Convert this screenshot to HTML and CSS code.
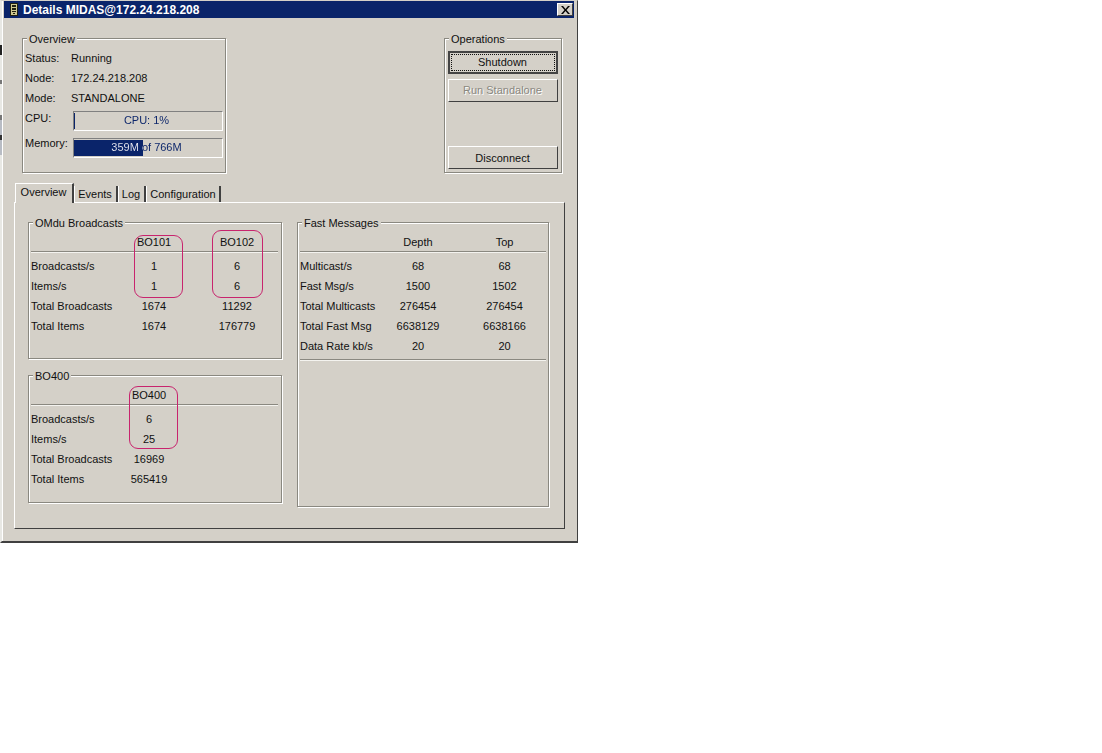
FILE: index.html
```html
<!DOCTYPE html>
<html lang="en">
<head>
    <meta charset="UTF-8">
    <title>Details MIDAS@172.24.218.208</title>
    <link rel="stylesheet" href="styles.css">
</head>
<body>

<div class="behind"></div>
<div class="window">
    <div class="titlebar">
        <svg class="app-icon" width="8" height="13" viewBox="0 0 8 13">
            <rect x="0.500" y="0.500" width="7" height="12" fill="#cfc890" stroke="#20200f"/>
            <rect x="2" y="2" width="4" height="2" fill="#20200f"/>
            <rect x="2" y="5" width="4" height="2" fill="#20200f"/>
            <rect x="2" y="8" width="4" height="1" fill="#20200f"/>
            <rect x="3" y="10" width="2" height="1" fill="#20200f"/>
        </svg>
        <span class="title">Details MIDAS@172.24.218.208</span>
        <div class="close-btn">
            <svg width="9" height="8" viewBox="0 0 9 8">
                <path d="M0 0h2l2.500 3 2.500-3h2L5.500 4 9 8H7L4.500 5 2 8H0l3.500-4z" fill="#000"/>
            </svg>
        </div>
    </div>

    <div class="top">
        <div class="group overview">
            <span class="legend">Overview</span>
            <div class="info">
                <span>Status:</span><span>Running</span>
                <span>Node:</span><span>172.24.218.208</span>
                <span>Mode:</span><span>STANDALONE</span>
                <span class="lbl-bar">CPU:</span>
                <div class="bar bar-cpu" style="--pct: 1%">
                    <div class="bar-fill"></div>
                    <div class="bar-text">CPU: 1%</div>
                </div>
                <span class="lbl-bar">Memory:</span>
                <div class="bar bar-mem" style="--pct: 46.500%">
                    <div class="bar-fill"></div>
                    <div class="bar-text">359M of 766M</div>
                </div>
            </div>
        </div>

        <div class="group operations">
            <span class="legend">Operations</span>
            <button class="btn btn-default"><span class="focus">Shutdown</span></button>
            <button class="btn" disabled>Run Standalone</button>
            <button class="btn btn-last">Disconnect</button>
        </div>
    </div>

    <div class="tabs">
        <div class="tab active">Overview</div>
        <div class="tab tab-events">Events</div>
        <div class="tab tab-log">Log</div>
        <div class="tab tab-config">Configuration</div>
    </div>

    <div class="panel">
        <div class="col-left">
            <div class="group omdu">
                <span class="legend">OMdu Broadcasts</span>
                <div class="stats stats-omdu">
                    <span class="head"></span><span class="head">BO101</span><span class="head">BO102</span>
                    <span>Broadcasts/s</span><span>1</span><span>6</span>
                    <span>Items/s</span><span>1</span><span>6</span>
                    <span>Total Broadcasts</span><span>1674</span><span>11292</span>
                    <span>Total Items</span><span>1674</span><span>176779</span>
                </div>
                <div class="mark mark-bo101"></div>
                <div class="mark mark-bo102"></div>
            </div>
            <div class="group bo400">
                <span class="legend">BO400</span>
                <div class="stats stats-bo400">
                    <span class="head"></span><span class="head">BO400</span><span class="head"></span>
                    <span>Broadcasts/s</span><span>6</span><span></span>
                    <span>Items/s</span><span>25</span><span></span>
                    <span>Total Broadcasts</span><span>16969</span><span></span>
                    <span>Total Items</span><span>565419</span><span></span>
                </div>
                <div class="mark mark-bo400"></div>
            </div>
        </div>
        <div class="group fast">
            <span class="legend">Fast Messages</span>
            <div class="stats stats-fast">
                <span class="head"></span><span class="head">Depth</span><span class="head">Top</span>
                <span>Multicast/s</span><span>68</span><span>68</span>
                <span>Fast Msg/s</span><span>1500</span><span>1502</span>
                <span>Total Multicasts</span><span>276454</span><span>276454</span>
                <span>Total Fast Msg</span><span>6638129</span><span>6638166</span>
                <span>Data Rate kb/s</span><span>20</span><span>20</span>
            </div>
            <div class="rule"></div>
        </div>
    </div>
</div>

</body>
</html>
```

FILE: styles.css
```css
html, body {
    margin: 0;
    padding: 0;
    background-color: #fff;
}
/* sliver of another window showing left of this one */
.behind {
    position: absolute;
    top: 30px;
    left: 0;
    width: 2px;
    height: 135px;
    z-index: 2;
    background: linear-gradient(180deg, #e8e8e4 0 15px, #222 15px 25px, #e8e8e4 25px 50px, #777 50px 54px, #e8e8e4 54px 85px, #777 85px 90px, #b8bcc4 90px 105px, #333 105px 110px, #b8bcc4 110px 125px, #e8e8e4 125px);
}
.window {
    box-sizing: border-box;
    width: 578px;
    height: 543px;
    background-color: #d4d0c8;
    border-left: 2px solid #e8e8e4;
    border-top: 1px solid #d4d0c8;
    border-right: 1px solid #404040;
    border-bottom: 2px solid #404040;
    box-shadow: inset 1px 0 0 #fff;
    font-family: "Liberation Sans", Arial, sans-serif;
    font-size: 11px;
    line-height: 14px;
    color: #111;
    white-space: nowrap;
}

.titlebar {
    display: flex;
    align-items: center;
    height: 17px;
    margin: 0 3px 0 2px;
    padding: 0 1px 0 6px;
    background-color: #0a246a;
}
.app-icon {
    margin-right: 5px;
}
.title {
    flex: 1;
    color: #fff;
    font-weight: bold;
    font-size: 12px;
}
.close-btn {
    display: flex;
    align-items: center;
    justify-content: center;
    width: 14px;
    height: 11px;
    background-color: #d4d0c8;
    border: 1px solid;
    border-color: #fff #404040 #404040 #fff;
}

/* etched box with a caption sitting on its top edge */
.group {
    position: relative;
    box-sizing: border-box;
    border: 1px solid #8a8880;
    box-shadow: 1px 1px 0 #fff, inset 1px 1px 0 #fff;
}
.legend {
    position: absolute;
    top: -7px;
    left: 4px;
    padding: 0 2px;
    background-color: #d4d0c8;
}

.top {
    display: flex;
    justify-content: space-between;
    margin: 20px 15px 0 20px;
}
.overview {
    width: 204px;
    height: 135px;
    padding: 9px 0 0 2px;
}
.info {
    display: grid;
    grid-template-columns: 46px 152px;
    grid-template-rows: 20px 20px 20px 25px 25px;
    align-items: center;
}
.lbl-bar {
    align-self: start;
    padding-top: 3px;
}

.bar {
    position: relative;
    box-sizing: border-box;
    height: 20px;
    margin-left: 2px;
    background-color: #d4d0c8;
    border: 1px solid;
    border-color: #808080 #fff #fff #808080;
}
.bar-cpu {
    align-self: start;
    margin-top: 3px;
}
.bar-mem {
    align-self: end;
}
.bar-fill {
    position: absolute;
    top: 1px;
    bottom: 1px;
    left: 0;
    width: var(--pct);
    background-color: #0a246a;
}
.bar-text {
    position: relative;
    padding-right: 3px;
    text-align: center;
    line-height: 17px;
    color: transparent;
    background: linear-gradient(90deg, #e8e8f0 var(--pct), #0a246a var(--pct));
    -webkit-background-clip: text;
    background-clip: text;
}

.operations {
    display: flex;
    flex-direction: column;
    align-items: center;
    width: 118px;
    height: 135px;
    padding-top: 12px;
}
.btn {
    box-sizing: border-box;
    width: 110px;
    height: 23px;
    margin: 0 0 5px 0;
    padding: 0 1px 2px 0;
    background-color: #d4d0c8;
    border: 1px solid;
    border-color: #fff #404040 #404040 #fff;
    font-family: inherit;
    font-size: 11px;
    color: #111;
}
.btn:disabled {
    color: #8a8880;
    text-shadow: 1px 1px 0 #fff;
}
.btn-default {
    border: 2px solid #444;
    padding: 1px;
}
.focus {
    display: block;
    padding-right: 1px;
    line-height: 15px;
    border: 1px dotted #111;
}
.btn-last {
    margin: auto 0 3px 0;
    padding-bottom: 0;
}

.tabs {
    display: flex;
    align-items: flex-start;
    height: 19px;
    margin: 10px 0 0 13px;
    position: relative;
    z-index: 1;
}
.tab {
    box-sizing: border-box;
    height: 16px;
    margin-top: 3px;
    text-align: center;
    line-height: 16px;
    border-left: 1px solid #fff;
    border-right: 2px solid #404040;
}
.tab.active {
    width: 59px;
    height: 20px;
    margin-top: 0;
    padding-right: 1px;
    line-height: 16px;
    background-color: #d4d0c8;
    border-top: 1px solid #fff;
}
.tab-events {
    width: 44px;
    padding-right: 1px;
}
.tab-log {
    width: 28px;
    padding-right: 1px;
}
.tab-config {
    width: 75px;
}

.panel {
    display: flex;
    gap: 15px;
    box-sizing: border-box;
    width: 551px;
    height: 327px;
    margin-left: 12px;
    padding: 19px 0 0 13px;
    border: 1px solid;
    border-color: #fff #404040 #404040 #fff;
}
.col-left {
    display: flex;
    flex-direction: column;
    gap: 16px;
    width: 254px;
}
.omdu {
    height: 137px;
    padding: 9px 0 0 2px;
}
.bo400 {
    height: 128px;
    padding: 9px 0 0 2px;
}
.fast {
    width: 252px;
    height: 285px;
    padding: 9px 0 0 2px;
}

.stats {
    display: grid;
    grid-auto-rows: 20px;
    align-items: center;
    justify-items: center;
}
.stats > span:nth-child(3n+1) {
    justify-self: start;
}
.stats > span:nth-child(3n) {
    padding-left: 2px;
}
.stats > .head {
    align-self: start;
    justify-self: stretch !important;
    height: 19px;
    text-align: center;
    line-height: 20px;
    border-bottom: 1px solid #8a8880;
    box-shadow: 0 1px 0 #f4f3ef;
}
.stats-omdu {
    grid-template-columns: 83px 80px 84px;
    grid-template-rows: 24px;
}
.stats-bo400 {
    grid-template-columns: 78px 80px 89px;
    grid-template-rows: 24px;
}
.stats-fast {
    grid-template-columns: 75px 86px 85px;
    grid-template-rows: 24px;
}
.rule {
    width: 246px;
    height: 1px;
    margin-top: 3px;
    background-color: #8a8880;
    box-shadow: 0 1px 0 #f4f3ef;
}

/* hand-drawn highlight rings over the figures */
.mark {
    position: absolute;
    box-sizing: border-box;
    border: 1px solid #c8246e;
    border-radius: 9px;
}
.mark-bo101 {
    left: 105px;
    top: 12px;
    width: 49px;
    height: 63px;
}
.mark-bo102 {
    left: 183px;
    top: 7px;
    width: 51px;
    height: 68px;
}
.mark-bo400 {
    left: 100px;
    top: 10px;
    width: 49px;
    height: 63px;
}
```
